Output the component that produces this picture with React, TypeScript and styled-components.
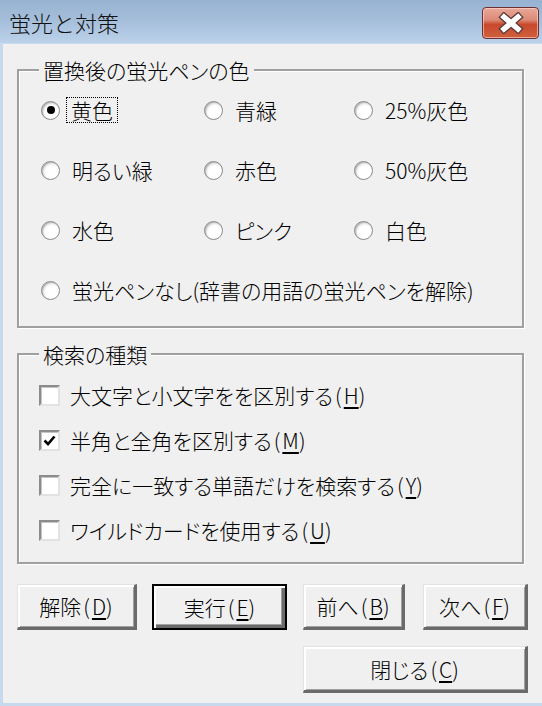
import React from 'react';
import styled, { createGlobalStyle } from 'styled-components';

const Global = createGlobalStyle`
  html, body { margin: 0; padding: 0; background: #f0f0f0; }
  body { font-family: "Noto Sans CJK JP", "Noto Sans", sans-serif; font-weight: 300; color: #000; }
  * { box-sizing: border-box; }
`;

const Window = styled.div`
  width: 542px;
  height: 706px;
  display: flex;
  flex-direction: column;
  background: #f0f0f0;
  overflow: hidden;
`;

const TitleBar = styled.div`
  height: 44px;
  flex: none;
  display: flex;
  align-items: flex-start;
  background: linear-gradient(to bottom, #97b2d1 0%, #a6bfdb 50%, #bcd2ea 100%);
  border-bottom: 1px solid #c9dbee;
`;

const Title = styled.div`
  font-size: 22px;
  line-height: 30px;
  margin: 7px 0 0 9px;
  color: #111;
`;

const CloseButton = styled.div`
  margin: 7px 3px 0 auto;
  width: 57px;
  height: 32px;
  border-radius: 4px;
  border: 1px solid #6b2f34;
  background: linear-gradient(to bottom, #e9a898 0%, #dc8a76 40%, #c8492d 55%, #cf5f3c 100%);
  box-shadow: inset 0 0 0 1px rgba(255, 220, 210, 0.6);
  display: flex;
  align-items: center;
  justify-content: center;
`;

const Client = styled.div`
  flex: 1;
  display: flex;
  flex-direction: column;
  border-left: 3px solid #c6d9ed;
  border-bottom: 3px solid #c6d9ed;
  padding: 12px 0 0 14px;
`;

const Group = styled.fieldset<{ $pt: number; $pb: number }>`
  margin: 0;
  width: 507px;
  padding: ${p => p.$pt}px 0 ${p => p.$pb}px 0;
  border: 2px solid #a0a0a0;
  box-shadow: inset 1px 1px 0 #fff, 1px 1px 0 #fff;
  & + & { margin-top: 12px; }
`;

const Legend = styled.legend`
  margin-left: 20px;
  padding: 0 4px;
  font-size: 21px;
  line-height: 28px;
  background: #f0f0f0;
  font-feature-settings: "palt";
`;

const RadioGrid = styled.div`
  display: grid;
  grid-template-columns: 163px 150px 1fr;
  grid-auto-rows: 30px;
  row-gap: 30px;
  padding-left: 22px;
`;

const Option = styled.div<{ $span?: boolean; $gap?: number }>`
  display: flex;
  align-items: center;
  gap: ${p => p.$gap ?? 11}px;
  grid-column: ${p => (p.$span ? '1 / -1' : 'auto')};
`;

const RadioCircle = styled.span<{ $checked?: boolean }>`
  width: 19px;
  height: 19px;
  flex: none;
  border-radius: 50%;
  border: 1px solid #8a8a8a;
  background: radial-gradient(circle at 60% 62%, #ffffff 0%, #ffffff 45%, #e2e2e2 70%, #c4c4c4 100%);
  box-shadow: inset 1px 1px 1px rgba(0, 0, 0, 0.18);
  display: flex;
  align-items: center;
  justify-content: center;
  &::after {
    content: '';
    width: 8px;
    height: 8px;
    border-radius: 50%;
    background: #000;
    display: ${p => (p.$checked ? 'block' : 'none')};
  }
`;

const Label = styled.span<{ $focus?: boolean }>`
  font-size: 21px;
  line-height: 24px;
  white-space: nowrap;
  font-feature-settings: "palt";
  border: 1px dotted ${p => (p.$focus ? '#000' : 'transparent')};
  padding: ${p => (p.$focus ? '0 4px' : '0')};
`;

const CheckList = styled.div`
  display: flex;
  flex-direction: column;
  gap: 15px;
  padding-left: 20px;
`;

const CheckRow = styled.div`
  height: 30px;
  display: flex;
  align-items: center;
  gap: 9px;
`;

const CheckBox = styled.span`
  width: 21px;
  height: 21px;
  flex: none;
  background: #fff;
  border-style: solid;
  border-width: 2px;
  border-color: #8c8c8c #e2e2e2 #e2e2e2 #8c8c8c;
  box-shadow: inset 1px 1px 0 #c4c4c4;
  display: flex;
  align-items: center;
  justify-content: center;
`;

const U = styled.span`
  text-decoration: underline;
  text-underline-offset: 3px;
`;

const Paren = styled.span`
  margin: 0 2px;
`;

const ButtonArea = styled.div`
  width: 511px;
  display: flex;
  flex-direction: column;
  align-items: flex-end;
  gap: 16px;
  margin-top: 20px;
`;

const ButtonRow = styled.div`
  width: 100%;
  display: flex;
  justify-content: flex-end;
`;

const Button = styled.div<{ $w: number; $h?: number; $ml?: number; $default?: boolean }>`
  width: ${p => p.$w}px;
  height: ${p => p.$h ?? 46}px;
  margin-left: ${p => p.$ml ?? 0}px;
  flex: none;
  display: flex;
  align-items: center;
  justify-content: center;
  font-size: 21px;
  font-feature-settings: "palt";
  background: #f0f0f0;
  border-style: solid;
  border-width: ${p => (p.$default ? '2px' : '1px 3px 3px 1px')};
  border-color: ${p => (p.$default ? '#000' : '#e3e3e3 #6a6a6a #6a6a6a #e3e3e3')};
  box-shadow: ${p =>
    p.$default
      ? 'inset 2px 2px 0 #fff, inset -3px -3px 0 #6a6a6a, inset -4px -4px 0 #a0a0a0'
      : 'inset 2px 2px 0 #fff, inset -1px -1px 0 #a0a0a0'};
`;

const FirstRow = styled.div`
  width: 100%;
  display: flex;
`;

const CloseIcon = () => (
  <svg width="28" height="22" viewBox="0 0 28 22">
    <path d="M7 5 L21 17 M21 5 L7 17" stroke="#5b3a3a" strokeWidth="8" strokeLinecap="square" />
    <path d="M7 5 L21 17 M21 5 L7 17" stroke="#ffffff" strokeWidth="5.4" strokeLinecap="square" />
  </svg>
);

const CheckMark = () => (
  <svg width="15" height="15" viewBox="0 0 15 15">
    <path d="M2.5 7.5 L6 11 L12.5 3.5" stroke="#000" strokeWidth="2.6" fill="none" />
  </svg>
);

const radios: { label: string; checked?: boolean; span?: boolean }[] = [
  { label: '黄色', checked: true },
  { label: '青緑' },
  { label: '25%灰色' },
  { label: '明るい緑' },
  { label: '赤色' },
  { label: '50%灰色' },
  { label: '水色' },
  { label: 'ピンク' },
  { label: '白色' },
  { label: '蛍光ペンなし(辞書の用語の蛍光ペンを解除)', span: true },
];

const checks: { text: string; key: string; checked?: boolean }[] = [
  { text: '大文字と小文字をを区別する', key: 'H' },
  { text: '半角と全角を区別する', key: 'M', checked: true },
  { text: '完全に一致する単語だけを検索する', key: 'Y' },
  { text: 'ワイルドカードを使用する', key: 'U' },
];

export default function App() {
  return (
    <Window>
      <Global />
      <TitleBar>
        <Title>蛍光と対策</Title>
        <CloseButton>
          <CloseIcon />
        </CloseButton>
      </TitleBar>
      <Client>
        <Group $pt={11} $pb={21}>
          <Legend>置換後の蛍光ペンの色</Legend>
          <RadioGrid>
            {radios.map(r => (
              <Option key={r.label} $span={r.span} $gap={r.checked ? 6 : 11}>
                <RadioCircle $checked={r.checked} />
                <Label $focus={r.checked}>{r.label}</Label>
              </Option>
            ))}
          </RadioGrid>
        </Group>
        <Group $pt={12} $pb={17}>
          <Legend>検索の種類</Legend>
          <CheckList>
            {checks.map(c => (
              <CheckRow key={c.key}>
                <CheckBox>{c.checked && <CheckMark />}</CheckBox>
                <Label>
                  {c.text}
                  <Paren>(</Paren>
                  <U>{c.key}</U>)
                </Label>
              </CheckRow>
            ))}
          </CheckList>
        </Group>
        <ButtonArea>
          <FirstRow>
            <Button $w={120}>解除<Paren>(</Paren><U>D</U>)</Button>
            <Button $w={135} $ml={15} $default>実行<Paren>(</Paren><U>E</U>)</Button>
            <Button $w={102} $ml={16}>前へ<Paren>(</Paren><U>B</U>)</Button>
            <Button $w={105} $ml={18}>次へ<Paren>(</Paren><U>F</U>)</Button>
          </FirstRow>
          <ButtonRow>
            <Button $w={225} $h={47}>閉じる<Paren>(</Paren><U>C</U>)</Button>
          </ButtonRow>
        </ButtonArea>
      </Client>
    </Window>
  );
}
